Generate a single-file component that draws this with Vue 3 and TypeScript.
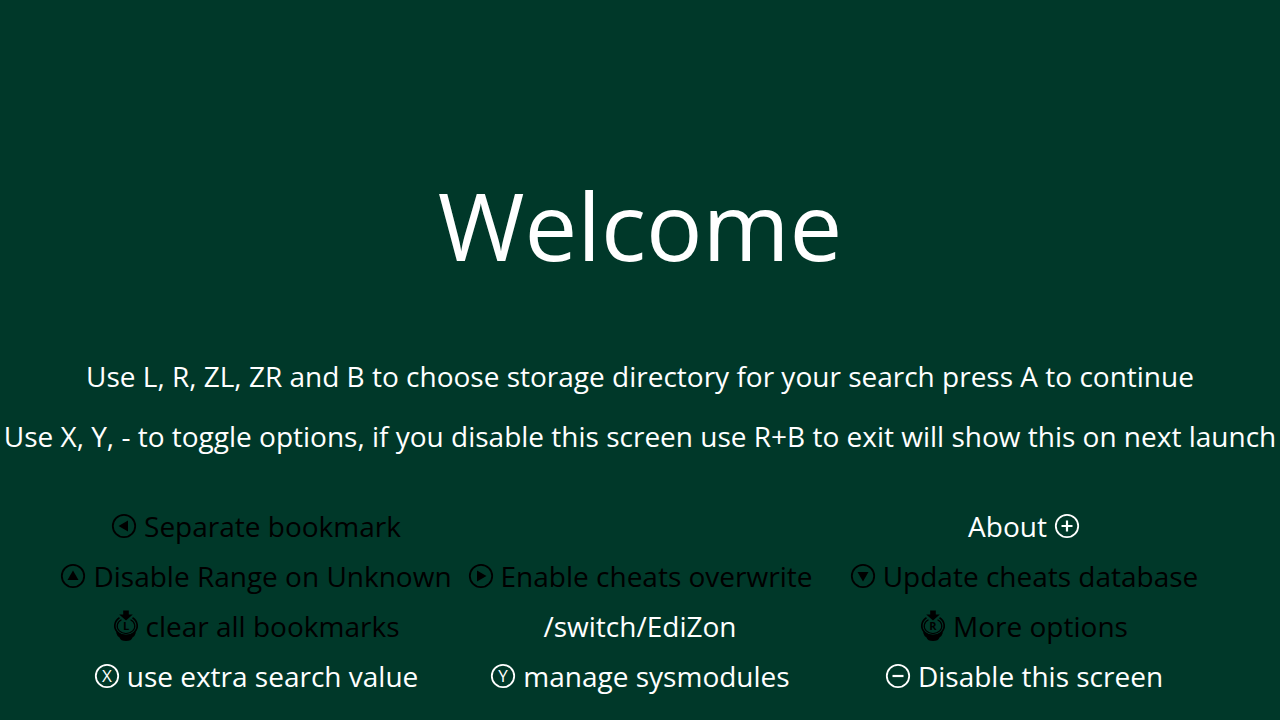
<script setup lang="ts">
type IconName = 'left' | 'up' | 'right' | 'down' | 'stickL' | 'stickR' | 'x' | 'y' | 'plus' | 'minus'

interface Hint {
  label: string
  icon: IconName
  active: boolean
  iconAfter?: boolean
}

const rows: (Hint | string | null)[][] = [
  [
    { label: 'Separate bookmark', icon: 'left', active: false },
    null,
    { label: 'About', icon: 'plus', active: true, iconAfter: true },
  ],
  [
    { label: 'Disable Range on Unknown', icon: 'up', active: false },
    { label: 'Enable cheats overwrite', icon: 'right', active: false },
    { label: 'Update cheats database', icon: 'down', active: false },
  ],
  [
    { label: 'clear all bookmarks', icon: 'stickL', active: false },
    '/switch/EdiZon',
    { label: 'More options', icon: 'stickR', active: false },
  ],
  [
    { label: 'use extra search value', icon: 'x', active: true },
    { label: 'manage sysmodules', icon: 'y', active: true },
    { label: 'Disable this screen', icon: 'minus', active: true },
  ],
]

const cells = rows.flat()

const arrows: Partial<Record<IconName, string>> = {
  left: 'M7.5 17 17 11.5v11z',
  up: 'M13 11.5 18.5 21h-11z',
  right: 'M18.5 17 9 11.5v11z',
  down: 'M13 22.5 7.5 13h11z',
}

const signs: Partial<Record<IconName, string>> = {
  plus: 'M7.5 17h11M13 11.5v11',
  minus: 'M7.5 17h11',
}

const letters: Partial<Record<IconName, string>> = {
  x: 'X',
  y: 'Y',
  stickL: 'L',
  stickR: 'R',
}

const isStick = (icon: IconName): boolean => icon === 'stickL' || icon === 'stickR'
</script>

<template>
  <main class="screen">
    <h1 class="title">Welcome</h1>
    <div class="intro">
      <p>Use L, R, ZL, ZR and B to choose storage directory for your search press A to continue</p>
      <p>Use X, Y, - to toggle options, if you disable this screen use R+B to exit will show this on next launch</p>
    </div>
    <div class="hints">
      <div v-for="(cell, i) in cells" :key="i" class="cell">
        <span v-if="typeof cell === 'string'">{{ cell }}</span>
        <button
          v-else-if="cell"
          type="button"
          class="hint"
          :class="{ off: !cell.active, reversed: cell.iconAfter }"
        >
          <svg class="icon" viewBox="0 0 26 34" aria-hidden="true">
            <template v-if="isStick(cell.icon)">
              <path d="M10.2 1.5h5.6v4h4L13 11.5 6.2 5.5h4z" fill="currentColor" />
              <path d="M6.5 8.8A11.2 9.800 0 1 0 19.5 8.8" fill="none" stroke="currentColor" stroke-width="1.7" />
              <path d="M8.500 10.8A8.800 7.400 0 1 0 17.500 10.8" fill="none" stroke="currentColor" stroke-width="1.2" />
              <path d="M4.500 23Q13 29 21.500 23L23 23.500Q22 27 19.500 28.5Q18.5 32 13 32T6.5 28.5Q4 27 3 23.500z" fill="currentColor" />
            </template>
            <circle v-else cx="13" cy="17" r="11.2" fill="none" stroke="currentColor" stroke-width="1.8" />
            <path v-if="arrows[cell.icon]" :d="arrows[cell.icon]" fill="currentColor" />
            <path v-if="signs[cell.icon]" :d="signs[cell.icon]" fill="none" stroke="currentColor" stroke-width="2.2" />
            <text
              v-if="letters[cell.icon]"
              x="13"
              :y="isStick(cell.icon) ? 21 : 23"
              class="letter"
              :class="{ small: isStick(cell.icon) }"
              fill="currentColor"
            >{{ letters[cell.icon] }}</text>
          </svg>
          <span>{{ cell.label }}</span>
        </button>
      </div>
    </div>
  </main>
</template>

<style>
body {
  margin: 0;
  background: #003829;
}
</style>

<style scoped>
.screen {
  box-sizing: border-box;
  min-height: 100vh;
  padding: 160px 0 16px;
  overflow: hidden;
  background: #003829;
  color: #fff;
  font-family: "Open Sans", "Noto Sans", sans-serif;
  font-size: 28px;
  font-weight: 400;
  text-align: center;
}

.title {
  margin: 0;
  font-size: 94px;
  line-height: 130px;
  font-weight: 400;
}

.intro {
  display: flex;
  flex-direction: column;
  align-items: center;
  padding: 56px 0 35px;
}

.intro p {
  margin: 0;
  line-height: 60px;
  white-space: nowrap;
}

.hints {
  display: grid;
  grid-template-columns: repeat(3, minmax(0, 1fr));
  grid-auto-rows: 50px;
  padding: 0 5%;
}

.cell {
  display: flex;
  align-items: center;
  justify-content: center;
  white-space: nowrap;
}

.hint {
  display: flex;
  flex: none;
  align-items: center;
  gap: 7px;
  padding: 0;
  border: 0;
  background: none;
  color: inherit;
  font: inherit;
  cursor: pointer;
}

.hint.off {
  color: #000;
}

.hint.reversed {
  flex-direction: row-reverse;
}

.icon {
  flex: none;
  width: 26px;
  height: 34px;
}

.letter {
  font-size: 17px;
  text-anchor: middle;
}

.letter.small {
  font-size: 11px;
  font-weight: 700;
}
</style>
